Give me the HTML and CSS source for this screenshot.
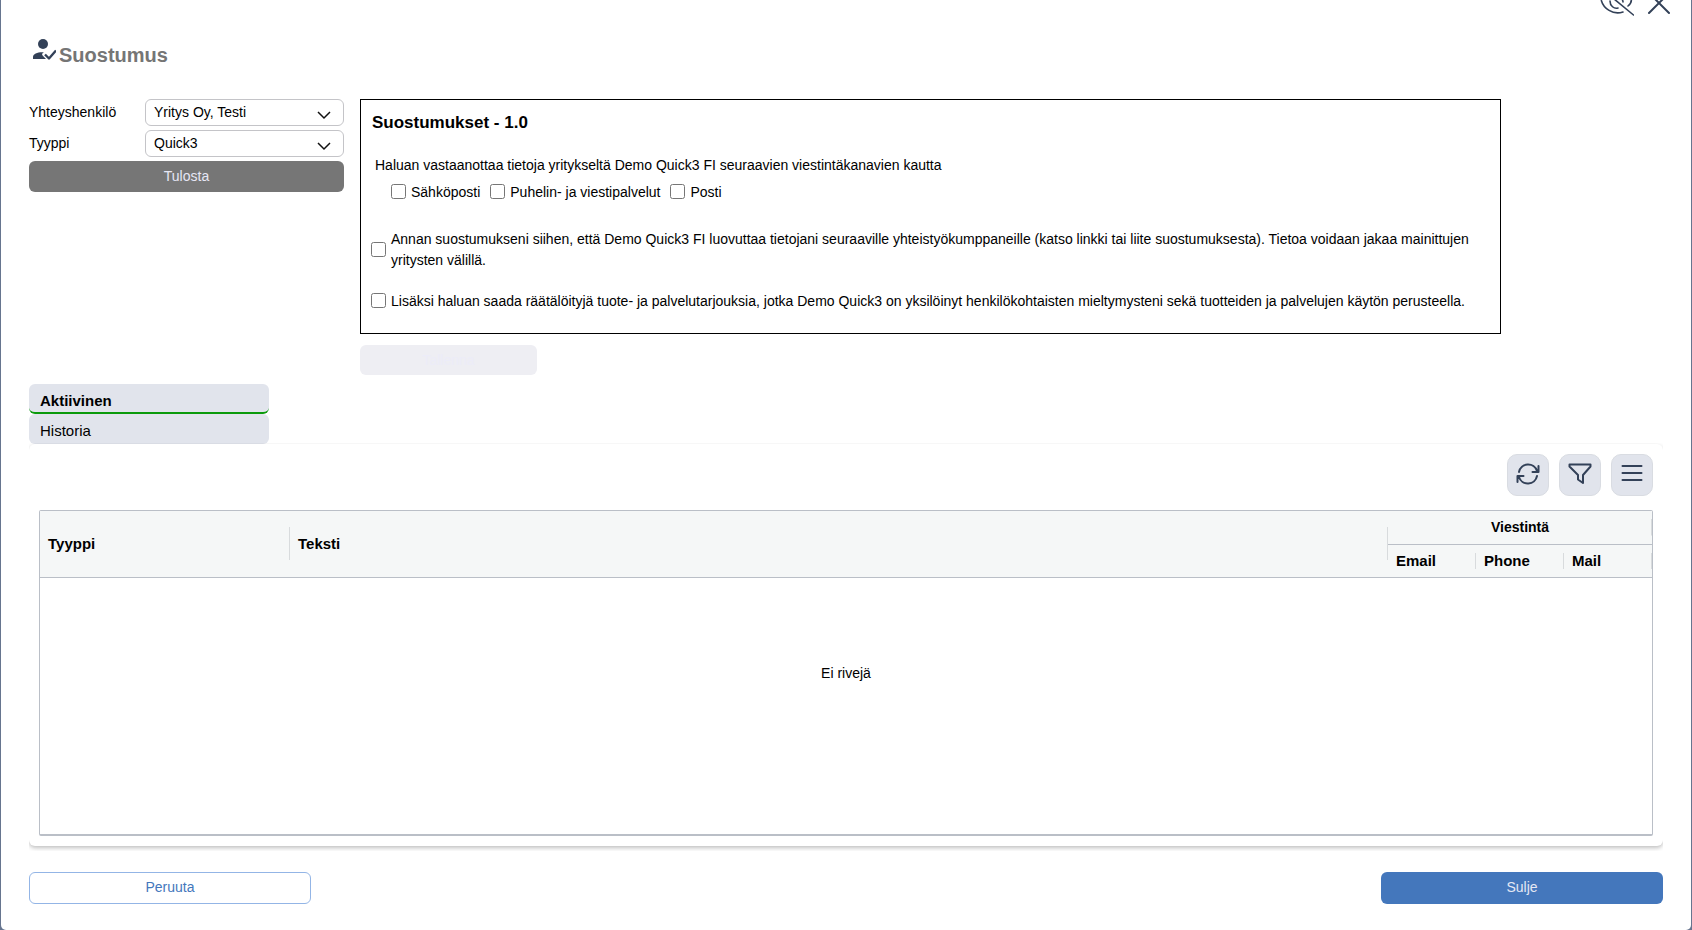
FILE: index.html
```html
<!DOCTYPE html>
<html lang="fi">
<head>
    <meta charset="UTF-8">
    <meta name="viewport" content="width=device-width, initial-scale=1.0">
    <title>Suostumus</title>
    <link rel="stylesheet" href="styles.css">
</head>
<body>
    <div class="modal">
        <div class="modal-tools">
            <button type="button" class="icon-btn" aria-label="Piilota">
                <svg class="eye" width="34" height="30" viewBox="0 0 34 30">
                    <path d="M24 5C19 2 10 2 5 7c-3 3-4 4-3.500 6 2 7 11 14.500 21.500 11M31 10c1 3-.5 6-3 8M10 13c0 5 4 8 8 7M23 14c0-2-1-3-2-4M8 6l25.500 21"/>
                </svg>
            </button>
            <button type="button" class="icon-btn" aria-label="Sulje ikkuna">
                <svg width="24" height="24" viewBox="0 0 24 24">
                    <path d="M2 2l20 20M22 2L2 22"/>
                </svg>
            </button>
        </div>

        <header class="title">
            <svg width="24" height="22" viewBox="0 0 24 22">
                <circle cx="11" cy="5" r="5"/>
                <path d="M1 20v-2c0-3.500 5-5.200 11-4.800-2 1-2.500 2.300-1.200 3.500L14 20z"/>
                <path class="tick" d="M13 15.500l4 4 7-8"/>
            </svg>
            <h1>Suostumus</h1>
        </header>

        <div class="top">
            <form class="fields">
                <label for="contact">Yhteyshenkilö</label>
                <select id="contact"><option>Yritys Oy, Testi</option></select>
                <label for="type">Tyyppi</label>
                <select id="type"><option>Quick3</option></select>
                <button type="button" class="print">Tulosta</button>
            </form>

            <div class="consent">
                <div class="consent-box">
                    <h2>Suostumukset - 1.0</h2>
                    <p>Haluan vastaanottaa tietoja yritykseltä Demo Quick3 FI seuraavien viestintäkanavien kautta</p>
                    <div class="channels">
                        <label><input type="checkbox">Sähköposti</label>
                        <label><input type="checkbox">Puhelin- ja viestipalvelut</label>
                        <label><input type="checkbox">Posti</label>
                    </div>
                    <label class="term"><input type="checkbox"><span>Annan suostumukseni siihen, että Demo Quick3 FI luovuttaa tietojani seuraaville yhteistyökumppaneille (katso linkki tai liite suostumuksesta). Tietoa voidaan jakaa mainittujen yritysten välillä.</span></label>
                    <label class="term"><input type="checkbox"><span>Lisäksi haluan saada räätälöityjä tuote- ja palvelutarjouksia, jotka Demo Quick3 on yksilöinyt henkilökohtaisten mieltymysteni sekä tuotteiden ja palvelujen käytön perusteella.</span></label>
                </div>
                <button type="button" class="save" disabled>Tallenna</button>
            </div>
        </div>

        <nav class="tabs">
            <button type="button" class="tab active">Aktiivinen</button>
            <button type="button" class="tab">Historia</button>
        </nav>

        <section class="panel">
            <div class="toolbar">
                <button type="button" class="tool" aria-label="Päivitä">
                    <svg width="24" height="24" viewBox="0 0 24 24">
                        <path d="M3 10a9.300 9.300 0 0 1 18-1M22.500 4v6h-6M21 14a9.300 9.300 0 0 1-18 1M1.500 20v-6h6"/>
                    </svg>
                </button>
                <button type="button" class="tool" aria-label="Suodata">
                    <svg width="24" height="24" viewBox="0 0 24 24">
                        <path d="M1.500 2.500h21v2L15 13v8l-5-3.500V13L1.500 4.500z"/>
                    </svg>
                </button>
                <button type="button" class="tool" aria-label="Valikko">
                    <svg width="24" height="24" viewBox="0 0 24 24">
                        <path d="M2.500 4h19M2.500 11h19M2.500 18h19"/>
                    </svg>
                </button>
            </div>

            <div class="grid">
                <table>
                    <colgroup>
                        <col class="col-type">
                        <col>
                        <col class="col-channel">
                        <col class="col-channel">
                        <col class="col-channel">
                    </colgroup>
                    <thead>
                        <tr>
                            <th rowspan="2">Tyyppi</th>
                            <th rowspan="2">Teksti</th>
                            <th colspan="3" class="group">Viestintä</th>
                        </tr>
                        <tr>
                            <th>Email</th>
                            <th>Phone</th>
                            <th>Mail</th>
                        </tr>
                    </thead>
                    <tbody>
                        <tr><td colspan="5">Ei rivejä</td></tr>
                    </tbody>
                </table>
            </div>
        </section>

        <footer>
            <button type="button" class="cancel">Peruuta</button>
            <button type="button" class="close">Sulje</button>
        </footer>
    </div>
</body>
</html>
```
FILE: styles.css
```css
* {
    margin: 0;
    padding: 0;
    box-sizing: border-box;
    font-family: "Liberation Sans", Arial, sans-serif;
}

body {
    background: #66758f;
    color: #000;
    font-size: 14px;
    line-height: 21px;
    padding: 0 1px 1px;
}

button {
    font-size: 14px;
    border: none;
    border-radius: 6px;
    cursor: pointer;
}

svg {
    display: block;
    fill: none;
    stroke: #334158;
    stroke-width: 2;
    stroke-linecap: round;
    stroke-linejoin: round;
}

.modal {
    display: flow-root;
    background: #fff;
    border-radius: 0 0 5px 5px;
    min-height: calc(100vh - 1px);
    padding: 0 28px 26px;
}

/* Close / hide icons, cut by the upper edge */
.modal-tools {
    display: flex;
    justify-content: flex-end;
    gap: 13px;
    height: 30px;
    margin: -12px -8px 0 0;
}

.icon-btn {
    background: none;
    height: 30px;
}

.eye {
    stroke-width: 1.6;
}

/* Title */
.title {
    display: flex;
    gap: 3px;
    padding: 21px 0 0 3px;
    height: 81px;
}

.title svg {
    fill: #334158;
    stroke: none;
}

.title .tick {
    fill: none;
    stroke: #334158;
    stroke-width: 2.4;
    stroke-linecap: butt;
}

.title h1 {
    font-size: 20px;
    line-height: 32px;
    color: #757575;
}

/* Form and consent text */
.top {
    display: flex;
    gap: 16px;
}

.fields {
    width: 315px;
    display: grid;
    grid-template-columns: 116px 1fr;
    gap: 4px 0;
    align-content: start;
}

.fields label {
    padding-top: 3px;
}

.fields select {
    appearance: none;
    height: 27px;
    font-size: 14px;
    color: #000;
    padding: 0 8px 1px;
    border: 1px solid #c4c4c8;
    border-radius: 6px;
    background: #fff url("data:image/svg+xml,%3Csvg xmlns='http://www.w3.org/2000/svg' width='14' height='9'%3E%3Cpath d='M1 1l6 6 6-6' fill='none' stroke='%23111' stroke-width='1.5'/%3E%3C/svg%3E") no-repeat right 12px top 11px;
}

.print {
    grid-column: 1 / 3;
    height: 31px;
    padding-bottom: 2px;
    background: #767676;
    color: #e6e6f5;
}

.consent {
    width: 1141px;
}

.consent-box {
    border: 1px solid #000;
    padding: 12px 11px 0 10px;
    height: 235px;
}

.consent-box h2 {
    font-size: 17px;
    line-height: 21px;
    padding-left: 1px;
    margin-bottom: 22px;
}

.consent-box p {
    padding-left: 4px;
}

.consent-box input {
    width: 15px;
    height: 15px;
    margin-bottom: 2px;
    flex: none;
}

.channels {
    display: flex;
    gap: 10px;
    padding: 6px 0 0 20px;
    margin-bottom: 26px;
}

.channels label,
.term {
    display: flex;
    align-items: center;
    gap: 5px;
}

.term {
    margin-bottom: 20px;
}

.save {
    width: 177px;
    height: 30px;
    margin-top: 11px;
    background: #eeeef3;
    color: #ececf8;
}

/* Tabs */
.tabs {
    display: flex;
    flex-direction: column;
    width: 240px;
    margin-top: 9px;
}

.tab {
    height: 30px;
    padding: 2px 11px 0;
    font-size: 15px;
    text-align: left;
    background: #e1e4ec;
}

.tab.active {
    padding-top: 4px;
    font-weight: bold;
    border-bottom: 2px solid #0b9a0b;
}

/* List panel */
.panel {
    padding: 10px;
    border-radius: 6px;
    box-shadow: 0 2px 4px rgba(0, 0, 0, 0.25);
    clip-path: inset(-1px 0 -5px 0);
}

.toolbar {
    display: flex;
    justify-content: flex-end;
    gap: 10px;
    margin-bottom: 14px;
}

.tool {
    display: grid;
    place-items: center;
    width: 42px;
    height: 42px;
    border: 1px solid #d9dce2;
    border-radius: 10px;
    background: #e1e4ec;
}

.tool svg {
    margin-bottom: 2px;
}

.grid {
    border: 1px solid #babfc7;
    border-bottom-width: 2px;
    border-radius: 2px;
}

table {
    width: 100%;
    table-layout: fixed;
    border-collapse: collapse;
}

.col-type {
    width: 250px;
}

.col-channel {
    width: 88px;
}

th {
    height: 33px;
    padding: 0 8px;
    font-size: 15px;
    text-align: left;
    border-bottom: 1px solid #babfc7;
    background: linear-gradient(#d8dbdd, #d8dbdd) no-repeat right center / 1px 50% #f5f7f7;
}

th.group {
    font-size: 14px;
    text-align: center;
}

td {
    height: 257px;
    padding-bottom: 64px;
    text-align: center;
}

/* Footer */
footer {
    display: flex;
    justify-content: space-between;
    margin-top: 26px;
}

footer button {
    width: 282px;
    height: 32px;
    padding-bottom: 2px;
}

.cancel {
    background: #fff;
    border: 1px solid #93b5e6;
    color: #4477bc;
}

.close {
    background: #4477bc;
    color: #e4e8f4;
}
```
